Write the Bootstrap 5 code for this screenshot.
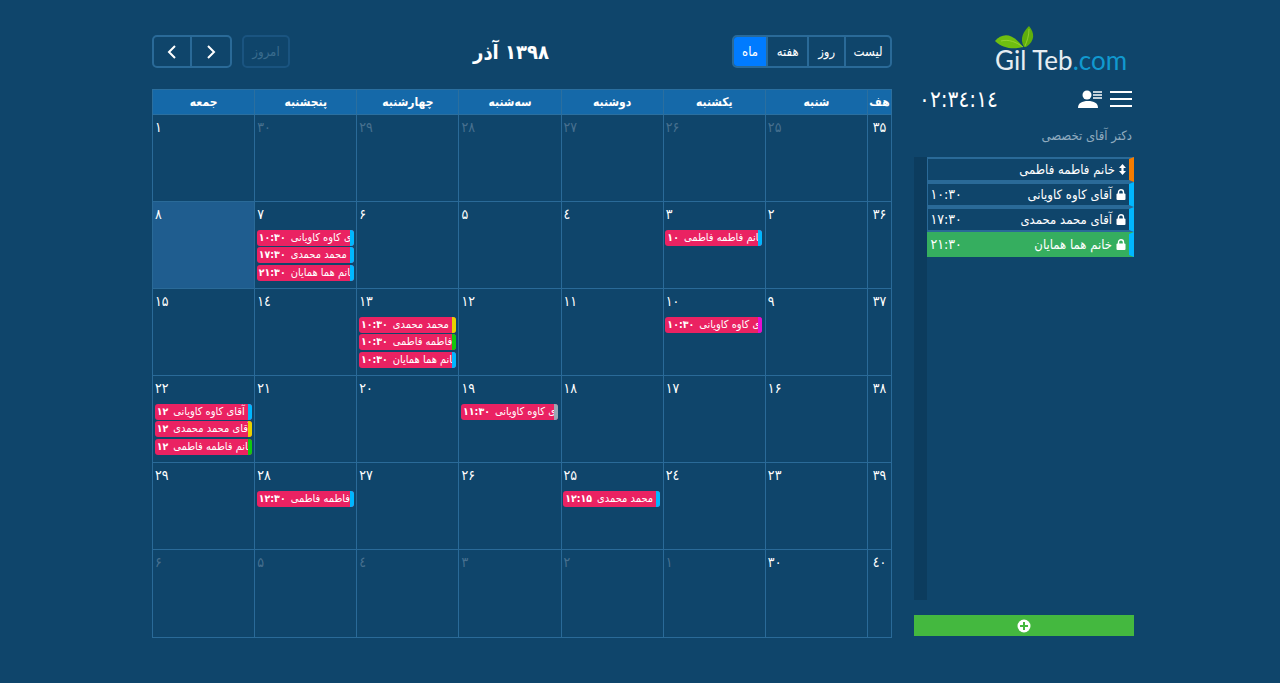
<!DOCTYPE html>
<html lang="fa" dir="rtl">
  <head>
    <meta charset="UTF-8" />
    <meta name="viewport" content="width=device-width, initial-scale=1.0" />
    <title>GilTeb</title>
    <link href="https://cdn.jsdelivr.net/npm/bootstrap@5.3.0/dist/css/bootstrap.min.css" rel="stylesheet" />
    <style>
      body {
        background-color: #0f456b;
        color: #fff;
        font-family: "DejaVu Sans Condensed", "DejaVu Sans", "Liberation Sans", sans-serif;
        overflow: hidden;
      }
      .page-wrap {
        width: 982px;
        height: 683px;
        margin-right: 146px;
        gap: 22px;
      }
      .side-col {
        width: 220px;
        flex-shrink: 0;
      }
      .main-col {
        width: 740px;
        padding-top: 35px;
      }

      /* sidebar */
      .logo-box {
        height: 49px;
        margin-top: 26px;
        width: 132px;
        margin-right: 7px;
        direction: ltr;
        position: relative;
      }
      .logo-leaf {
        position: absolute;
        left: 0;
        top: 0;
      }
      .logo-text {
        position: absolute;
        left: 0;
        top: 17px;
        font-family: "Lato", "Liberation Sans", sans-serif;
        font-weight: 400;
        font-size: 26px;
        line-height: 34px;
        color: #e6edf2;
        white-space: nowrap;
      }
      .logo-text span {
        color: #1199cf;
      }
      .tool-row {
        height: 24px;
        margin-top: 12px;
        padding-right: 2px;
      }
      .clock-text {
        font-size: 22.5px;
        line-height: 24px;
        padding-left: 5px;
        white-space: nowrap;
      }
      .clock-text bdo {
        unicode-bidi: bidi-override;
      }
      .doc-name {
        color: #8fabbf;
        font-size: 13px;
        line-height: 16px;
        margin-top: 17px;
        padding-right: 2px;
      }
      .appt-panel {
        height: 443px;
        margin-top: 13px;
      }
      .panel-rail {
        width: 12.5px;
        flex-shrink: 0;
        background-color: #0c3c5e;
        order: 2;
      }
      .appt-list {
        flex-grow: 1;
        order: 1;
      }
      .appt-item {
        height: 25px;
        border: 2px solid #2a6a98;
        border-right: 5px solid #00b7ff;
        border-left-width: 1px;
        padding: 0 3px 0 3px;
        font-size: 13px;
        line-height: 21px;
      }
      .appt-item.is-wait {
        border-right-color: #f57c00;
      }
      .appt-item.is-now {
        background-color: #35ae5f;
        border-top-color: #35ae5f;
        border-bottom-color: #35ae5f;
        border-left-color: #35ae5f;
      }
      .appt-time {
        font-size: 14px;
      }
      .appt-item svg {
        margin-left: 4px;
        vertical-align: -1px;
      }
      .add-btn {
        display: block;
        width: 100%;
        height: 21px;
        margin-top: 15px;
        padding: 0;
        background-color: #44b83f;
        border: 0;
        border-radius: 0;
        line-height: 18px;
      }

      /* toolbar */
      .cal-toolbar {
        height: 33px;
        margin-bottom: 22px;
      }
      .cal-title {
        font-size: 20px;
        font-weight: 700;
        line-height: 28px;
        margin: 0;
      }
      .view-group,
      .nav-group {
        border: 2px solid #2a6a98;
        border-radius: 5px;
        overflow: hidden;
        height: 33px;
      }
      .view-btn {
        background: transparent;
        border: 0;
        border-left: 2px solid #2a6a98;
        color: #fff;
        font-size: 13px;
        padding: 0;
        height: 100%;
      }
      .view-btn:last-child {
        border-left: 0;
      }
      .view-btn.is-on {
        background-color: #007bff;
      }
      .nav-btn {
        width: 39px;
        background: transparent;
        border: 0;
        padding: 0;
        height: 100%;
      }
      .nav-btn + .nav-btn {
        border-right: 2px solid #2a6a98;
      }
      .today-btn {
        width: 48px;
        height: 33px;
        border: 2px solid #1a5480;
        border-radius: 5px;
        background: transparent;
        color: #3a6c8e;
        font-size: 13px;
        padding: 0;
        margin-left: 10px;
      }

      /* month grid */
      .cal-table {
        width: 740px;
        table-layout: fixed;
        border-collapse: collapse;
        margin-top: -1px;
      }
      .cal-table th {
        height: 25px;
        padding: 0;
        background-color: #1569a9;
        border: 1px solid #2b6f9f;
        font-size: 12px;
        line-height: 22px;
        text-align: center;
        font-weight: 700;
      }
      .cal-table th:first-child {
        width: 24px;
      }
      .cal-table td {
        height: 87px;
        padding: 0;
        border: 1px solid #2a6a98;
        vertical-align: top;
        overflow: hidden;
      }
      .cal-table tr:last-child td {
        height: 88px;
      }
      .week-no {
        font-size: 14px;
        line-height: 20px;
        text-align: center;
        padding-top: 2px;
      }
      .day-no {
        direction: ltr;
        font-size: 14px;
        line-height: 20px;
        padding: 2px 0 0 2px;
        height: 28px;
      }
      .day-no.is-off {
        color: #47708f;
      }
      .cal-table td.is-today {
        background-color: #1f5d8f;
      }
      .cal-evt {
        direction: ltr;
        display: flex;
        height: 16px;
        width: 97px;
        margin: 0 2.5px 1.3px 0;
        border-radius: 3px;
        overflow: hidden;
        background-color: #ea2262;
        font-size: 11px;
        line-height: 15px;
        white-space: nowrap;
      }
      .evt-body {
        flex-grow: 1;
        min-width: 0;
        display: flex;
        justify-content: flex-start;
        gap: 5px;
        overflow: hidden;
        padding-left: 2px;
      }
      .evt-time {
        font-weight: 700;
        font-size: 10.5px;
        letter-spacing: -1px;
        flex-shrink: 0;
      }
      .evt-name {
        flex-shrink: 0;
        direction: rtl;
      }
      .evt-strip {
        width: 4px;
        flex-shrink: 0;
      }
    </style>
  </head>
  <body>
    <div class="page-wrap d-flex">
      <!-- sidebar sits first because the page is rtl -->
      <aside class="side-col">
        <div class="logo-box">
          <svg class="logo-leaf" width="132" height="24" viewBox="0 0 132 24">
            <path d="M0 15 C7 7 17 6 28 21 C18 24 7 22 0 15Z" fill="#6fbe10" />
            <path d="M29 21 C24 12 29 5 34 0 C40 7 40 15 31 21Z" fill="#5fae0c" />
            <path d="M6 15 C14 13 21 16 28 21 M34 3 C34 10 32 15 30 20" stroke="#a4dc3e" stroke-width="0.7" fill="none" />
          </svg>
          <div class="logo-text">Gil Teb<span>.com</span></div>
        </div>
        <div class="tool-row d-flex align-items-center">
          <svg width="22" height="16" viewBox="0 0 22 16" class="ms-2">
            <path d="M0 1h22M0 8h22M0 15h22" stroke="#fff" stroke-width="2" fill="none" />
          </svg>
          <svg width="24" height="18" viewBox="0 0 24 18">
            <circle cx="9" cy="5" r="4.5" fill="#fff" />
            <path d="M0 18 C0 13 4 11 10 11 C16 11 20 13 20 18Z" fill="#fff" />
            <path d="M15 2h9M15 5h9M15 8h9" stroke="#fff" stroke-width="1.6" fill="none" />
          </svg>
          <div class="clock-text flex-grow-1 text-start"><bdo dir="ltr">۰۲:۳٤:۱٤</bdo></div>
        </div>
        <div class="doc-name">دکتر آقای تخصصی</div>
        <div class="appt-panel d-flex" id="apptPanel">
          <div class="panel-rail"></div>
          <div class="appt-list" id="apptList"></div>
        </div>
        <button class="add-btn btn" aria-label="add">
          <svg width="14" height="14" viewBox="0 0 14 14">
            <circle cx="7" cy="7" r="6.5" fill="#fff" />
            <path d="M7 3v8M3 7h8" stroke="#44b83f" stroke-width="2" />
          </svg>
        </button>
      </aside>

      <main class="main-col">
        <div class="cal-toolbar d-flex justify-content-between align-items-center">
          <div class="view-group d-flex" style="width:160px">
            <button class="view-btn" style="width:47px">لیست</button>
            <button class="view-btn" style="width:38px">روز</button>
            <button class="view-btn" style="width:42px">هفته</button>
            <button class="view-btn is-on" style="width:33px">ماه</button>
          </div>
          <h2 class="cal-title">۱۳۹۸ آذر</h2>
          <div class="d-flex align-items-center">
            <button class="today-btn" disabled>امروز</button>
            <div class="nav-group d-flex" style="width:80px">
              <button class="nav-btn" aria-label="next">
                <svg width="10" height="14" viewBox="0 0 10 14"><path d="M2 1l6 6-6 6" stroke="#fff" stroke-width="2" fill="none" /></svg>
              </button>
              <button class="nav-btn" aria-label="prev">
                <svg width="10" height="14" viewBox="0 0 10 14"><path d="M8 1L2 7l6 6" stroke="#fff" stroke-width="2" fill="none" /></svg>
              </button>
            </div>
          </div>
        </div>
        <table class="cal-table">
          <thead>
            <tr>
              <th>هف</th><th>شنبه</th><th>یکشنبه</th><th>دوشنبه</th><th>سه‌شنبه</th><th>چهارشنبه</th><th>پنجشنبه</th><th>جمعه</th>
            </tr>
          </thead>
          <tbody id="calBody"></tbody>
        </table>
      </main>
    </div>

    <script src="https://cdn.jsdelivr.net/npm/bootstrap@5.3.0/dist/js/bootstrap.bundle.min.js"></script>
    <script>
      // the reference font draws 4 in its arabic form
      const fa = (n) => String(n).replace(/\d/g, (d) => "۰۱۲۳٤۵۶۷۸۹"[d]);
      const KAVEH = "آقای کاوه کاویانی", MOHAMMAD = "آقای محمد محمدی", FATEMEH = "خانم فاطمه فاطمی", HOMA = "خانم هما همایان";
      const BLUE = "#00b7ff", YELLOW = "#e6d200", GREEN = "#12c80f", PINK = "#e60fd0", GRAY = "#9aa8b5";

      const events = {
        3: [[FATEMEH, "۱۰", BLUE]],
        7: [[KAVEH, "۱۰:۳۰", BLUE], [MOHAMMAD, "۱۷:۳۰", BLUE], [HOMA, "۲۱:۳۰", BLUE]],
        10: [[KAVEH, "۱۰:۳۰", PINK]],
        13: [[MOHAMMAD, "۱۰:۳۰", YELLOW], [FATEMEH, "۱۰:۳۰", GREEN], [HOMA, "۱۰:۳۰", BLUE]],
        19: [[KAVEH, "۱۱:۳۰", GRAY]],
        22: [[KAVEH, "۱۲", BLUE], [MOHAMMAD, "۱۲", YELLOW], [FATEMEH, "۱۲", GREEN]],
        25: [[MOHAMMAD, "۱۲:۱۵", BLUE]],
        28: [[FATEMEH, "۱۲:۳۰", BLUE]],
      };

      // each week: week number, then seven days from saturday
      const weeks = [
        [35, [25, 26, 27, 28, 29, 30, 1]],
        [36, [2, 3, 4, 5, 6, 7, 8]],
        [37, [9, 10, 11, 12, 13, 14, 15]],
        [38, [16, 17, 18, 19, 20, 21, 22]],
        [39, [23, 24, 25, 26, 27, 28, 29]],
        [40, [30, 1, 2, 3, 4, 5, 6]],
      ];

      let html = "";
      weeks.forEach(([no, days], w) => {
        html += `<tr><td><div class="week-no">${fa(no)}</div></td>`;
        days.forEach((d, i) => {
          const off = (w === 0 && i < 6) || (w === 5 && i > 0);
          const evts = off ? [] : events[d] || [];
          html += `<td class="${d === 8 ? "is-today" : ""}"><div class="day-no ${off ? "is-off" : ""}">${fa(d)}</div>`;
          evts.forEach(([name, time, color]) => {
            html += `<div class="cal-evt"><div class="evt-body"><span class="evt-time">${time}</span><span class="evt-name">${name}</span></div><div class="evt-strip" style="background:${color}"></div></div>`;
          });
          html += "</td>";
        });
        html += "</tr>";
      });
      document.getElementById("calBody").innerHTML = html;

      const lock = `<svg width="10" height="11" viewBox="0 0 10 11"><path d="M2.5 5V3.2a2.5 2.5 0 0 1 5 0V5" stroke="#fff" stroke-width="1.4" fill="none"/><rect x="0.5" y="4.6" width="9" height="6.4" rx="1" fill="#fff"/></svg>`;
      const sort = `<svg width="7" height="11" viewBox="0 0 7 11"><path d="M3.5 0L7 4H0ZM3.5 11L0 7h7Z" fill="#fff"/><rect x="2.4" y="3" width="2.2" height="5" fill="#fff"/></svg>`;
      const list = [
        [FATEMEH, "", sort, "is-wait"],
        [KAVEH, "۱۰:۳۰", lock, ""],
        [MOHAMMAD, "۱۷:۳۰", lock, ""],
        [HOMA, "۲۱:۳۰", lock, "is-now"],
      ];
      document.getElementById("apptList").innerHTML = list
        .map(([name, time, icon, cls]) => `<div class="appt-item d-flex justify-content-between ${cls}"><span>${icon}${name}</span><span class="appt-time">${time}</span></div>`)
        .join("");
    </script>
  </body>
</html>
